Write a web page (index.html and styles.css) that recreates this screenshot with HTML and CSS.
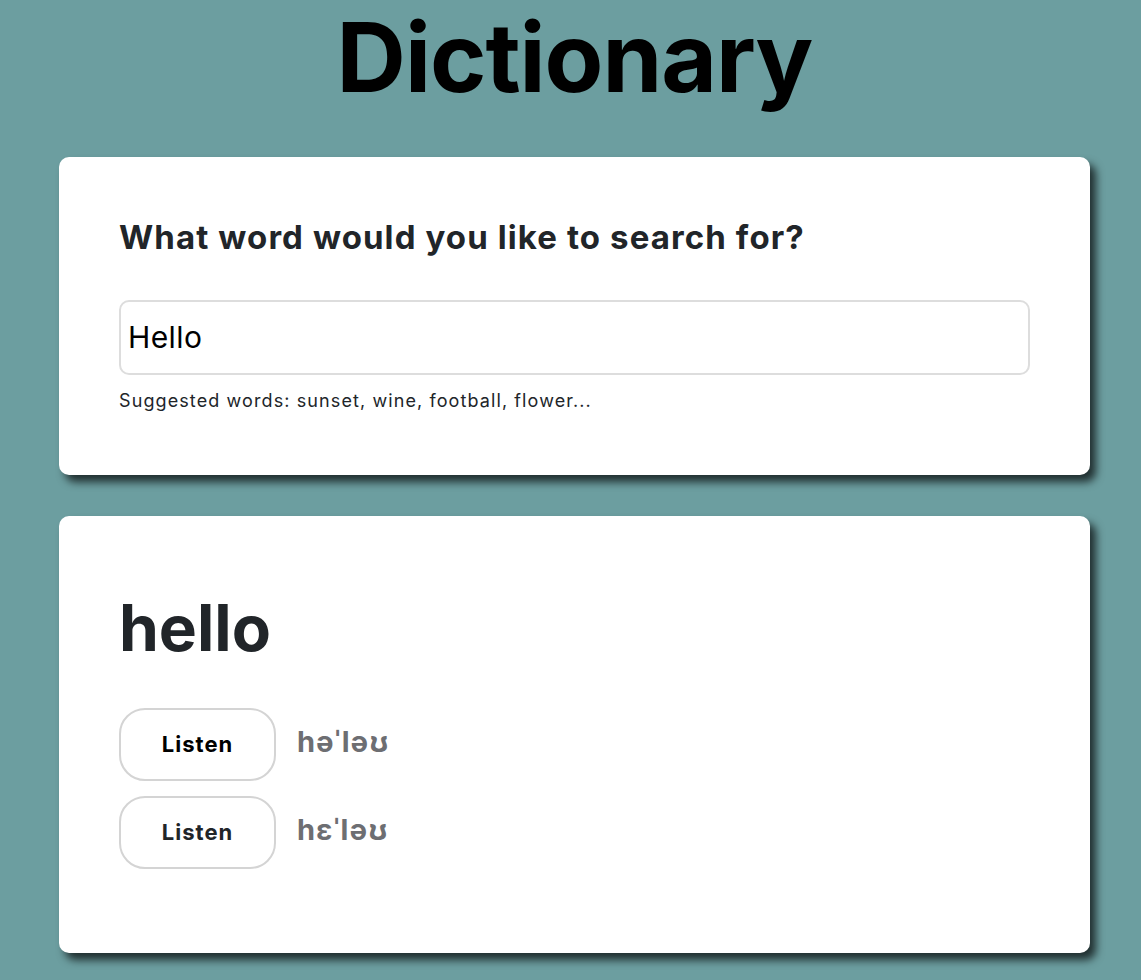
FILE: index.html
```html
<!DOCTYPE html>
<html lang="en">
<head>
<meta charset="utf-8">
<title>Dictionary</title>
<link rel="stylesheet" href="styles.css">
</head>
<body>
<div class="container">
  <h1 class="title">Dictionary</h1>
  <section class="card search-card">
    <h2 class="search-heading">What word would you like to search for?</h2>
    <input class="search-input" type="search" value="Hello">
    <p class="hint">Suggested words: sunset, wine, football, flower...</p>
  </section>
  <section class="card result-card">
    <h2 class="word">hello</h2>
    <div class="phonetics">
      <div class="phonetic-row">
        <button class="listen listen-active">Listen</button>
        <span class="ipa">həˈləʊ</span>
      </div>
      <div class="phonetic-row">
        <button class="listen">Listen</button>
        <span class="ipa">hɛˈləʊ</span>
      </div>
    </div>
  </section>
</div>
</body>
</html>
```

FILE: styles.css
```css
* { box-sizing: border-box; }

html, body {
  margin: 0;
  padding: 0;
  background: #6c9ea0;
  font-family: Inter, "Noto Sans", "Liberation Sans", sans-serif;
  color: #212529;
}

.container {
  width: 1031px;
  margin-left: 59px;
  padding-bottom: 40px;
}

.title {
  margin: 0;
  text-align: center;
  font-size: 96px;
  line-height: 1.2;
  font-weight: 700;
  color: #000;
  letter-spacing: -1px;
}

.card {
  background: #fff;
  border-radius: 10px;
  box-shadow: 6px 7px 8px rgba(0, 0, 0, 0.7);
  padding: 60px;
}

.search-card {
  margin-top: 42px;
  padding-bottom: 61px;
}

.search-heading {
  margin: 1px 0 0;
  font-size: 33px;
  line-height: 1.2;
  font-weight: 700;
  letter-spacing: 1.1px;
}

.search-input {
  display: block;
  width: 100%;
  height: 75px;
  margin-top: 42px;
  border: 2px solid #dddddd;
  border-radius: 10px;
  padding: 0 7px;
  font-family: inherit;
  font-size: 30px;
  letter-spacing: 0.4px;
  color: #000;
  outline: none;
  -webkit-appearance: none;
  appearance: none;
}

.hint {
  margin: 12px 0 0;
  font-size: 18px;
  line-height: 1.5;
  letter-spacing: 1.1px;
  color: #212529;
}

.result-card {
  margin-top: 41px;
  padding-bottom: 84px;
}

.word {
  margin: 14px 0 0;
  font-size: 64px;
  line-height: 1.2;
  font-weight: 700;
  letter-spacing: 0;
}

.phonetics {
  display: flex;
  flex-direction: column;
  gap: 15px;
  margin-top: 41px;
}

.phonetic-row {
  display: flex;
  align-items: center;
  gap: 21px;
}

.listen {
  width: 157px;
  height: 73px;
  border: 2px solid #d4d4d4;
  border-radius: 26px;
  background: #fff;
  font-family: inherit;
  font-size: 22px;
  font-weight: 700;
  letter-spacing: 1px;
  color: #212529;
  padding: 0;
}

.listen-active {
  color: #000;
}

.ipa {
  font-size: 29px;
  font-weight: 700;
  letter-spacing: 1.2px;
  color: #6d6e72;
  margin-top: -5px;
}
```
